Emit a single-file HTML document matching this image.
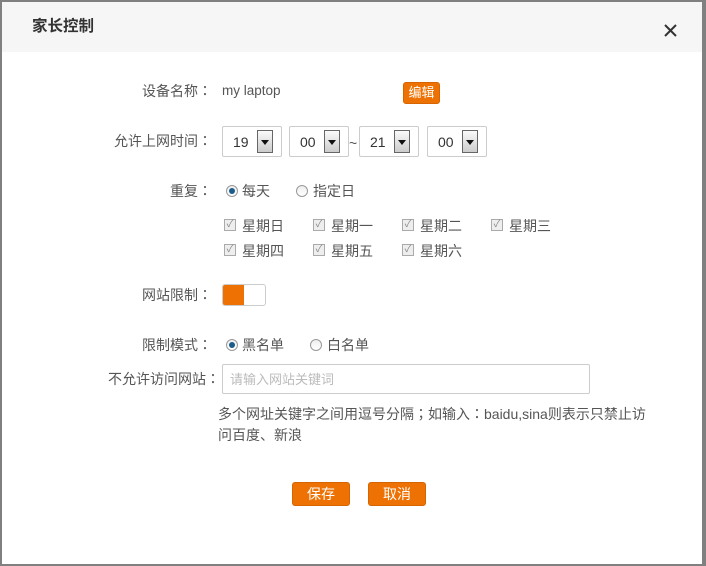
<!DOCTYPE html>
<html><head><meta charset="utf-8"><style>
*{margin:0;padding:0;box-sizing:border-box}
body{width:706px;height:566px;background:#808080;position:relative;overflow:hidden;font-family:"Liberation Sans","Noto Sans CJK SC",sans-serif;font-size:14px;color:#555}
#dlg{position:absolute;left:2px;top:2px;width:700px;height:562px;background:#fff}
#hd{position:absolute;left:0;top:0;width:700px;height:50px;background:#f6f6f6}
#hd .t{position:absolute;left:30px;top:12px;font-size:15.5px;color:#333;font-weight:bold}
.a{position:absolute;white-space:nowrap;line-height:16px}
.lbl{position:absolute;right:490px;text-align:right;white-space:nowrap;line-height:16px}
.c{font-family:"Noto Sans CJK JP",sans-serif}
.btn{position:absolute;background:#ee7203;color:#fff;border-radius:3px;border:1px solid #d66500;text-align:center;font-size:13px}
.sel{position:absolute;top:124px;width:60px;height:31px;border:1px solid #ccc;border-radius:2px;background:#fff}
.sel span{position:absolute;left:10px;top:7px;font-size:14px;color:#333}
.sel i{position:absolute;right:8px;top:3px;width:16px;height:23px;border:1px solid #666;background:linear-gradient(#fafafa,#ccc)}
.sel i:after{content:"";position:absolute;left:3px;top:9px;border-left:4px solid transparent;border-right:4px solid transparent;border-top:5px solid #111}
.rd{position:absolute;width:12px;height:12px;border-radius:50%;border:1px solid #999;background:linear-gradient(#eee,#fff)}
.rd.on:after{content:"";position:absolute;left:2px;top:2px;width:6px;height:6px;border-radius:50%;background:#1c5c8c}
.cb{position:absolute;width:12px;height:12px;border:1px solid #aaa;background:#eee;font-size:10px;line-height:10px;color:#888;text-align:center}
</style></head><body>
<div id="dlg">
<div id="hd"><div class="t">家长控制</div>
<svg style="position:absolute;left:661px;top:21px" width="15" height="15"><path d="M2 2L13 13M13 2L2 13" stroke="#333" stroke-width="2"/></svg></div>

<div class="lbl" style="top:81px">设备名称<span class="c">：</span></div>
<div class="a" style="left:220px;top:81px;font-size:13.5px">my laptop</div>
<div class="btn" style="left:401px;top:80px;width:37px;height:22px;line-height:20px">编辑</div>

<div class="lbl" style="top:131px">允许上网时间<span class="c">：</span></div>
<div class="sel" style="left:220px"><span>19</span><i></i></div>
<div class="sel" style="left:287px"><span>00</span><i></i></div>
<div class="a" style="left:347px;top:133px">~</div>
<div class="sel" style="left:357px"><span>21</span><i></i></div>
<div class="sel" style="left:425px"><span>00</span><i></i></div>

<div class="lbl" style="top:181px">重复<span class="c">：</span></div>
<div class="rd on" style="left:224px;top:183px"></div><div class="a" style="left:240px;top:181px">每天</div>
<div class="rd" style="left:294px;top:183px"></div><div class="a" style="left:311px;top:181px">指定日</div>

<div class="cb" style="left:222px;top:217px">✓</div><div class="a" style="left:240px;top:216px">星期日</div>
<div class="cb" style="left:311px;top:217px">✓</div><div class="a" style="left:329px;top:216px">星期一</div>
<div class="cb" style="left:400px;top:217px">✓</div><div class="a" style="left:418px;top:216px">星期二</div>
<div class="cb" style="left:489px;top:217px">✓</div><div class="a" style="left:507px;top:216px">星期三</div>
<div class="cb" style="left:222px;top:242px">✓</div><div class="a" style="left:240px;top:241px">星期四</div>
<div class="cb" style="left:311px;top:242px">✓</div><div class="a" style="left:329px;top:241px">星期五</div>
<div class="cb" style="left:400px;top:242px">✓</div><div class="a" style="left:418px;top:241px">星期六</div>

<div class="lbl" style="top:285px">网站限制<span class="c">：</span></div>
<div style="position:absolute;left:220px;top:282px;width:44px;height:22px;border:1px solid #ccc;border-radius:3px;background:#fff;overflow:hidden"><div style="width:21px;height:100%;background:#ee7203"></div></div>

<div class="lbl" style="top:335px">限制模式<span class="c">：</span></div>
<div class="rd on" style="left:224px;top:337px"></div><div class="a" style="left:240px;top:335px">黑名单</div>
<div class="rd" style="left:308px;top:337px"></div><div class="a" style="left:325px;top:335px">白名单</div>

<div class="lbl" style="top:369px;right:482px">不允许访问网站<span class="c">：</span></div>
<div style="position:absolute;left:220px;top:362px;width:368px;height:30px;border:1px solid #ccc;border-radius:2px"></div>
<div class="a" style="left:228px;top:370px;color:#bbb;font-size:13px">请输入网站关键词</div>

<div class="a" style="left:216px;top:402px;line-height:21px">多个网址关键字之间用逗号分隔<span class="c">；</span>如输入<span class="c">：</span>baidu,sina则表示只禁止访<br>问百度、新浪</div>

<div class="btn" style="left:290px;top:480px;width:58px;height:24px;line-height:22px;font-size:14px">保存</div>
<div class="btn" style="left:366px;top:480px;width:58px;height:24px;line-height:22px;font-size:14px">取消</div>
</div>
</body></html>
